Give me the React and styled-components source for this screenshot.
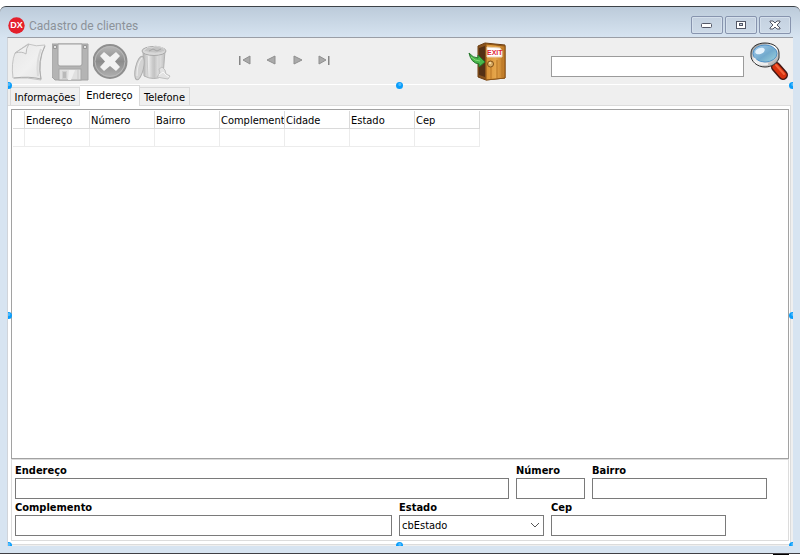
import React from "react";
import styled, { createGlobalStyle, css } from "styled-components";

const GlobalStyle = createGlobalStyle`
  *, *::before, *::after { box-sizing: border-box; }
  body {
    margin: 0;
    background: #fff;
    color: #000;
    font: 11px/14px "DejaVu Sans Condensed", Tahoma, "DejaVu Sans", sans-serif;
  }
  button, input, select { font: inherit; color: inherit; }
`;

const Page = styled.div`
  display: flex;
  flex-direction: column;
  min-height: 100vh;
  padding-top: 6px;
`;

const Window = styled.main`
  flex: 1;
  display: flex;
  flex-direction: column;
  padding: 0 7px 7px;
  border-top: 1px solid #3d4348;
  border-bottom: 1px solid #403f44;
  border-radius: 6px 6px 0 0;
  background: linear-gradient(#bccbda, #d7e4f1 31px);
`;

const Footing = styled.div`
  height: 1px;
  width: 16px;
  margin-left: auto;
  margin-right: 11px;
  background: #000;
`;

const TitleBar = styled.header`
  display: flex;
  align-items: center;
  height: 30px;
  padding: 6px 2px 0 1px;
`;

const Title = styled.h1`
  flex: 1;
  margin: 0 0 0 4px;
  padding-top: 1px;
  font: 12px/16px Roboto, sans-serif;
  color: #8c9299;
`;

const Controls = styled.div`
  display: flex;
  gap: 2px;
`;

const ControlButton = styled.button`
  display: grid;
  place-items: center;
  width: 32px;
  height: 18px;
  padding: 0;
  border: 1px solid #8794ae;
  border-radius: 2px;
  background: linear-gradient(#c4d1e0, #cddae8);
  box-shadow: inset 0 0 0 1px #d5e0ec;
`;

const Client = styled.div`
  position: relative;
  flex: 1;
  display: flex;
  flex-direction: column;
  overflow: hidden;
  border-top: 1px solid #9a9ea6;
  border-left: 1px solid #d0d4da;
  background: #efefef;
`;

const Toolbar = styled.div`
  display: flex;
  align-items: center;
  height: 47px;
  padding: 0 3px;
  border-bottom: 1px solid #fff;
`;

const IconButton = styled.button`
  flex: none;
  padding: 0;
  border: 0;
  background: none;
  svg { display: block; }
`;

const Actions = styled.div`
  display: flex;
  gap: 3px;
  padding-top: 2px;
`;

const Navigator = styled.div`
  display: flex;
  gap: 10px;
  margin-left: 66px;
  padding-bottom: 2px;
`;

const SearchArea = styled.div`
  display: flex;
  align-items: center;
  margin-left: auto;
  padding-top: 2px;
`;

const fieldBox = css`
  width: 100%;
  height: 21px;
  padding: 0 2px;
  border: 1px solid #7a7a7a;
  border-radius: 0;
  background: #fff;
  outline: none;
`;

const TextField = styled.input`
  ${fieldBox}
`;

const SearchField = styled.input`
  ${fieldBox}
  width: 193px;
  margin: 9px 6px 0 43px;
  border-color: #9b9b9b;
`;

const TabList = styled.div`
  display: flex;
  align-items: flex-end;
  height: 20px;
  padding-left: 2px;
`;

const Tab = styled.button`
  height: 18px;
  width: ${(p) => p.$width}px;
  padding: 2px 0 0;
  border: 1px solid #dadada;
  border-bottom: 0;
  border-left: ${(p) => (p.$first ? "1px solid #dadada" : "0")};
  background: #f0f0f0;
  white-space: nowrap;
  ${(p) =>
    p.$active &&
    css`
      z-index: 1;
      height: 21px;
      margin-bottom: -1px;
      padding: 0;
      background: #fff;
    `}
`;

const TabPanel = styled.section`
  flex: 1;
  display: flex;
  flex-direction: column;
  margin-right: 2px;
  padding: 3px 1px 3px 3px;
  border: 1px solid #dcdcdc;
  border-left: 0;
  background: #fff;
  margin-bottom: 1px;
`;

const GridFrame = styled.div`
  flex: 1;
  border: 1px solid #a2a2a2;
  padding: 1px 0 0 1px;
`;

const Table = styled.table`
  table-layout: fixed;
  width: 467px;
  border-collapse: separate;
  border-spacing: 0;

  th, td {
    height: 18px;
    padding: 0 0 0 1px;
    border: solid #ececec;
    border-width: 0 1px 1px 0;
  }
  th {
    overflow: hidden;
    padding-top: 2px;
    border-color: #dadada;
    font-weight: 400;
    text-align: left;
    white-space: nowrap;
  }
  col:first-child { width: 12px; }
`;

const AddressForm = styled.form`
  padding: 2px 3px;
  border: 1px solid #dcdcdc;
  height: 82px;
`;

const FormRow = styled.div`
  display: grid;
  grid-template-columns: ${(p) => p.$columns};
  gap: 7px;
  align-items: end;
  height: 37px;
  padding-right: ${(p) => p.$inset}px;
`;

const FieldLabel = styled.label`
  display: block;
  padding-top: 2px;
  font-weight: 700;
`;

const SelectBox = styled.select`
  ${fieldBox}
  appearance: none;
  padding: 0 20px 0 2px;
  grid-area: 1 / 1;
`;

const SelectWrap = styled.div`
  display: grid;
  align-items: center;
  svg {
    grid-area: 1 / 1;
    justify-self: end;
    margin-right: 4px;
    pointer-events: none;
  }
`;

const Handle = styled.i`
  position: absolute;
  left: ${(p) => p.$x};
  top: ${(p) => p.$y};
  width: 7px;
  height: 7px;
  margin: -4px;
  border-radius: 50%;
  background: radial-gradient(circle at 55% 35%, #4fbcff 0 1px, #0a9dfa 2px);
`;

const Field = ({ id, label }) => (
  <div>
    <FieldLabel htmlFor={id}>{label}</FieldLabel>
    <TextField id={id} type="text" />
  </div>
);

const AppLogo = () => (
  <svg width="17" height="17" viewBox="0 0 17 17" aria-hidden="true">
    <circle cx="8.5" cy="8.5" r="8.2" fill="#e4202c" />
    <text x="8.5" y="11.4" textAnchor="middle" fontFamily="Liberation Sans" fontWeight="700" fontSize="9" fill="#fff">DX</text>
  </svg>
);

const NewIcon = () => (
  <svg width="38" height="38" viewBox="0 0 38 38">
    <defs>
      <linearGradient id="paper" x1="0" y1="0" x2="1" y2="1">
        <stop offset="0" stopColor="#e6e6e6" />
        <stop offset=".55" stopColor="#f0f0f0" />
        <stop offset="1" stopColor="#e4e4e4" />
      </linearGradient>
    </defs>
    <path d="M4 10 L17 1 Q25 4 34 2 Q27 17 30 37 Q17 34 2 35 Q0 20 4 10Z" fill="url(#paper)" stroke="#c4c4c4" />
    <path d="M34 3 Q26 18 30 36 Q18 33 3 35" fill="none" stroke="#adadad" />
    <path d="M4 10 Q11 8 15 11 Q15 5 18 1Z" fill="#efefef" stroke="#bcbcbc" />
    <path d="M30 6 Q25 19 27 33" fill="none" stroke="#dadada" strokeWidth="2" />
  </svg>
);

const SaveIcon = () => (
  <svg width="38" height="38" viewBox="1 0 38 38">
    <path d="M1 1 H37 V37 H4 L1 34Z" fill="#b4b4b4" stroke="#a3a3a3" />
    <path d="M7 1 H31 V21 Q31 23 29 23 H9 Q7 23 7 21Z" fill="#efefef" stroke="#a0a0a0" />
    <path d="M2.500 2.500h3v3h-3zM32.500 2.500h3v3h-3z" fill="#e2e2e2" stroke="#979797" />
    <rect x="8" y="26" width="22" height="11" fill="#e0e0e0" stroke="#a6a6a6" />
    <rect x="11.500" y="28.500" width="4" height="7" fill="#b9b9b9" stroke="#cfcfcf" />
    <path d="M18 27 H24 L20 37 H17Z" fill="#efefef" />
    <path d="M27 27 V36" stroke="#c8c8c8" />
  </svg>
);

const CancelIcon = () => (
  <svg width="38" height="38" viewBox="2 0 38 38">
    <defs>
      <linearGradient id="disc" x1="0" y1="0" x2="0" y2="1">
        <stop offset="0" stopColor="#bababa" />
        <stop offset=".5" stopColor="#8c8c8c" />
        <stop offset="1" stopColor="#b2b2b2" />
      </linearGradient>
    </defs>
    <circle cx="19" cy="18.500" r="16.500" fill="url(#disc)" stroke="#8f8f8f" strokeWidth="2" />
    <circle cx="19" cy="18.500" r="15" fill="none" stroke="#b9b9b9" />
    <path d="M9 13 L13 9 L19 14 L25 9 L29 13 L24 18.500 L29 24 L25 28 L19 23 L13 28 L9 24 L14 18.500Z" fill="#f2f2f2" />
  </svg>
);

const TrashIcon = () => (
  <svg width="38" height="38" viewBox="0 0 38 38">
    <defs>
      <linearGradient id="can">
        <stop offset="0" stopColor="#b0b0b0" />
        <stop offset=".25" stopColor="#eaeaea" />
        <stop offset=".5" stopColor="#c0c0c0" />
        <stop offset=".72" stopColor="#e4e4e4" />
        <stop offset="1" stopColor="#bebebe" />
      </linearGradient>
    </defs>
    <path d="M9 8 L10 33 Q20 38 29 33 L31 8Z" fill="url(#can)" stroke="#b2b2b2" />
    <path d="M13 13 L14 34 M19 14 V35 M25 13 V34" stroke="#cacaca" />
    <ellipse cx="20" cy="8" rx="12" ry="4.500" fill="#dadada" stroke="#a9a9a9" />
    <path d="M10 8 L14 4 L18 5 L21 3 L26 4 L29 5 L31 8 Q22 12 10 8Z" fill="#c4c4c4" stroke="#d5d5d5" />
    <path d="M15 8 L19 6 L23 8 L27 6" fill="none" stroke="#a6a6a6" />
    <ellipse cx="5.500" cy="25" rx="4" ry="12" transform="rotate(13 5.500 25)" fill="#d3d3d3" stroke="#adadad" />
    <path d="M3 33 Q3 20 8 15" fill="none" stroke="#eee" />
    <path d="M23 34 L26 30 L25 26 L28 24 L31 27 L32 31 L36 33 L34 36 L28 35Z" fill="#e2e2e2" stroke="#c0c0c0" />
    <path d="M25 32 L29 29 L32 32 L35 34" fill="none" stroke="#f7f7f7" />
  </svg>
);

const navShapes = [
  { label: "Primeiro", path: "M12 2 V10 L5 6Z", bar: 1 },
  { label: "Anterior", path: "M11 2 V10 L3 6Z" },
  { label: "Próximo", path: "M4 2 V10 L12 6Z" },
  { label: "Último", path: "M3 2 V10 L10 6Z", bar: 12 },
];

const NavIcon = ({ path, bar }) => (
  <svg width="16" height="12" viewBox="0 0 16 12">
    <path d={path} fill="#aaa" stroke="#8f8f8f" />
    {bar && <rect x={bar} y="2" width="1.500" height="9" fill="#858585" />}
  </svg>
);

const ExitIcon = () => (
  <svg width="40" height="40" viewBox="0 0 40 40">
    <defs>
      <linearGradient id="door">
        <stop offset="0" stopColor="#d89034" />
        <stop offset=".5" stopColor="#e5a64b" />
        <stop offset="1" stopColor="#bd7723" />
      </linearGradient>
    </defs>
    <path d="M10 4 L17 1 L37 3 V36 L18 38 L10 35Z" fill="#87521e" stroke="#6d3e12" />
    <path d="M11 6 L17 4 V35 L11 33Z" fill="#543015" />
    <path d="M18 2 L37 4 V36 L18 38Z" fill="url(#door)" stroke="#8e5516" />
    <path d="M23 22 V37 M29 18 V36 M34 6 V35" stroke="#b97627" />
    <path d="M19 5 L32 6 L34 9 V15 H19Z" fill="#fff" stroke="#ead4b7" />
    <text x="19" y="13" fontFamily="Liberation Sans" fontWeight="700" fontSize="7" fill="#df2638">EXIT</text>
    <circle cx="22.500" cy="22" r="3" fill="#d8ad66" stroke="#815017" />
    <circle cx="22" cy="21" r="1" fill="#ffe7b0" />
    <path d="M1 11 Q5 16 10 16 V13 L17 20 L11 25 V22 Q3 21 1 11Z" fill="#48b64b" stroke="#24772b" />
    <path d="M3 15 Q7 19 12 19" fill="none" stroke="#86dc79" />
  </svg>
);

const SearchIcon = () => (
  <svg width="40" height="40" viewBox="0 0 40 40">
    <defs>
      <linearGradient id="rim" x1="0" y1="0" x2="1" y2="1">
        <stop offset="0" stopColor="#777" />
        <stop offset=".5" stopColor="#fff" />
        <stop offset="1" stopColor="#8b8b8b" />
      </linearGradient>
      <linearGradient id="glass" x1="0" y1="0" x2="1" y2="1">
        <stop offset="0" stopColor="#a9cfef" />
        <stop offset=".55" stopColor="#72aacd" />
        <stop offset="1" stopColor="#9ed4dc" />
      </linearGradient>
    </defs>
    <path d="M23 20 L27 23" stroke="#555" strokeWidth="5" />
    <path d="M26 25 L33 33" stroke="#451712" strokeWidth="10" strokeLinecap="round" />
    <path d="M26 25 L33 33" stroke="#d8320e" strokeWidth="7" strokeLinecap="round" />
    <path d="M26 23 L34 32" stroke="#f3643a" strokeWidth="2" strokeLinecap="round" />
    <path d="M1 11 C1 5 7 1 15 1 S29 5 29 11 V16 C27 22 21 25 15 25 C7 25 1 19 1 14Z" fill="url(#rim)" stroke="#303030" />
    <ellipse cx="15" cy="11.500" rx="12" ry="8.500" fill="url(#glass)" stroke="#5294ca" />
    <ellipse cx="10" cy="9" rx="5" ry="3" transform="rotate(-22 10 9)" fill="#e4f2fc" />
    <path d="M4 16 Q8 23 18 22" fill="none" stroke="#eee" strokeWidth="2" />
  </svg>
);

const columns = ["Endereço", "Número", "Bairro", "Complemento", "Cidade", "Estado", "Cep"];
const tabs = [
  { label: "Informações", width: 70 },
  { label: "Endereço", width: 60 },
  { label: "Telefone", width: 50 },
];
const handles = [
  ["1px", "48px"], ["calc(50% - 1px)", "48px"], ["100%", "48px"],
  ["1px", "calc(50% + 24px)"], ["100%", "calc(50% + 24px)"],
  ["1px", "100%"], ["calc(50% - 1px)", "100%"], ["100%", "100%"],
];
const actions = [
  ["Novo", NewIcon], ["Salvar", SaveIcon], ["Cancelar", CancelIcon], ["Excluir", TrashIcon],
];

export default function App() {
  return (
    <Page>
      <GlobalStyle />
      <Window>
        <TitleBar>
          <AppLogo />
          <Title>Cadastro de clientes</Title>
          <Controls>
            <ControlButton aria-label="Minimizar">
              <svg width="12" height="6"><rect x=".5" y="1.500" width="10" height="4" rx="1" fill="#fff" stroke="#535766" /></svg>
            </ControlButton>
            <ControlButton aria-label="Maximizar">
              <svg width="12" height="10"><rect x="1.500" y="1.500" width="9" height="7" fill="#fff" stroke="#535766" /><rect x="4.500" y="3.500" width="3" height="2" fill="#c9d5e2" stroke="#535766" /></svg>
            </ControlButton>
            <ControlButton aria-label="Fechar">
              <svg width="12" height="10"><path d="M1 1h3l2 2 2-2h3v1L8 5l3 3v1H8L6 7 4 9H1V8l3-3-3-3z" fill="#fff" stroke="#535766" /></svg>
            </ControlButton>
          </Controls>
        </TitleBar>
        <Client>
          <Toolbar>
            <Actions>
              {actions.map(([label, Icon]) => (
                <IconButton key={label} aria-label={label}><Icon /></IconButton>
              ))}
            </Actions>
            <Navigator>
              {navShapes.map((n) => (
                <IconButton key={n.label} aria-label={n.label}><NavIcon {...n} /></IconButton>
              ))}
            </Navigator>
            <SearchArea>
              <IconButton aria-label="Sair"><ExitIcon /></IconButton>
              <SearchField type="search" aria-label="Pesquisar" />
              <IconButton aria-label="Buscar"><SearchIcon /></IconButton>
            </SearchArea>
          </Toolbar>
          <TabList role="tablist">
            {tabs.map((t, i) => (
              <Tab key={t.label} role="tab" aria-selected={i === 1} $first={i === 0} $active={i === 1} $width={t.width}>
                {t.label}
              </Tab>
            ))}
          </TabList>
          <TabPanel role="tabpanel">
            <GridFrame>
              <Table>
                <colgroup>
                  <col />
                  {columns.map((c) => <col key={c} />)}
                </colgroup>
                <thead>
                  <tr><th aria-label="Indicador" />{columns.map((c) => <th key={c} scope="col">{c}</th>)}</tr>
                </thead>
                <tbody>
                  <tr><td />{columns.map((c) => <td key={c} />)}</tr>
                </tbody>
              </Table>
            </GridFrame>
            <AddressForm>
              <FormRow $columns="minmax(0, 1fr) 69px 175px" $inset={18}>
                <Field id="endereco" label="Endereço" />
                <Field id="numero" label="Número" />
                <Field id="bairro" label="Bairro" />
              </FormRow>
              <FormRow $columns="minmax(0, 1fr) 145px 175px" $inset={59}>
                <Field id="complemento" label="Complemento" />
                <div>
                  <FieldLabel htmlFor="estado">Estado</FieldLabel>
                  <SelectWrap>
                    <SelectBox id="estado"><option>cbEstado</option></SelectBox>
                    <svg width="10" height="7"><path d="M1 1 L5 5 L9 1" fill="none" stroke="#555" /></svg>
                  </SelectWrap>
                </div>
                <Field id="cep" label="Cep" />
              </FormRow>
            </AddressForm>
          </TabPanel>
          {handles.map(([x, y]) => <Handle key={x + y} $x={x} $y={y} />)}
        </Client>
      </Window>
      <Footing />
    </Page>
  );
}
